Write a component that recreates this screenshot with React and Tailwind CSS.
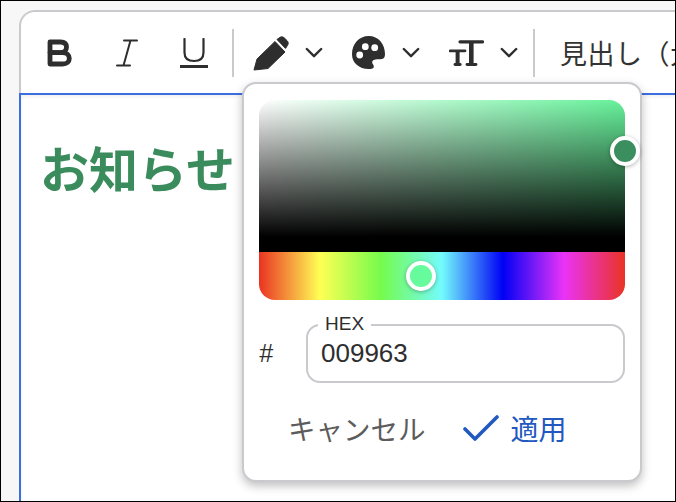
import React from "react";

const Chevron = () => (
  <svg width="18" height="12" viewBox="0 0 18 12" fill="none" stroke="#2e2e2e" strokeWidth="2.4" strokeLinecap="round" strokeLinejoin="round">
    <path d="M1.8 2 L9 9.2 L16.2 2" />
  </svg>
);

const BoldIcon = () => (
  <svg width="25" height="28" viewBox="0 0 25 28" fill="none" stroke="#2e2e2e" strokeWidth="4.8" strokeLinejoin="round" strokeLinecap="round">
    <path d="M3 3H13.5C17.5 3 19.5 5 19.5 8.2C19.5 11.4 17.5 13.6 13.5 13.6H3V3Z" />
    <path d="M3 13.6H15.5C19.8 13.6 22.3 16 22.3 19.4C22.3 22.8 19.8 25 15.5 25H3V13.6Z" />
  </svg>
);

const ItalicIcon = () => (
  <svg width="22" height="28" viewBox="0 0 22 28" fill="none" stroke="#2e2e2e" strokeWidth="2" strokeLinecap="round">
    <path d="M8 1.5H21M1 26.5H14M14.5 1.5L7.5 26.5" />
  </svg>
);

const UnderlineIcon = () => (
  <svg width="28" height="30" viewBox="0 0 28 30" fill="none" stroke="#2e2e2e">
    <path d="M4.5 1V14.5C4.5 20 8 23 14 23C20 23 23.5 20 23.5 14.5V1" strokeWidth="2.2" strokeLinecap="round" />
    <path d="M0 28.5H28" strokeWidth="3" />
  </svg>
);

const PencilIcon = () => (
  <svg width="36" height="36" viewBox="0 0 36 36" fill="#2e2e2e">
    <path d="M1 35L4 24L22 6.5L32 17L15 33.5Z" strokeLinejoin="round" stroke="#2e2e2e" strokeWidth="1" />
    <path d="M24 4.5L26.5 2.6C28 1.6 29.8 1.6 31.2 2.8L34 5.6C35.4 7 35.6 9 34.4 10.6L32.5 13.4Z" stroke="#2e2e2e" strokeWidth="1" strokeLinejoin="round" />
  </svg>
);

const PaletteIcon = () => (
  <svg width="33" height="33" viewBox="0 0 33 33" fill="#2e2e2e">
    <path fillRule="evenodd" d="M0 18.3C0 8 7 0 16.7 0C26.4 0 33 8 33 18.3C33 21 32 22.7 30 23C27.5 23.4 25.5 23 23.5 23.4C20.5 24 19.5 25.5 20.5 27.5C21.3 29 22.3 30 21.7 31.5C21 32.8 19 33 16.7 33C7 33 0 27 0 18.3Z" />
    <circle cx="13.3" cy="10.7" r="3.4" fill="#ffffff" />
    <circle cx="22.7" cy="11.7" r="3.4" fill="#ffffff" />
    <circle cx="7.7" cy="19" r="3.4" fill="#ffffff" />
  </svg>
);

const TextSizeIcon = () => (
  <svg width="35" height="28" viewBox="0 0 35 28" fill="none" stroke="#2e2e2e" strokeLinecap="round">
    <path d="M11 2.8H33.5" strokeWidth="3.2" />
    <path d="M22.3 3V25" strokeWidth="4.6" strokeLinecap="butt" />
    <path d="M18 25.5H27" strokeWidth="2.8" />
    <path d="M1.2 11.8H16" strokeWidth="2.8" />
    <path d="M8.6 12V25" strokeWidth="4" strokeLinecap="butt" />
    <path d="M6 25.5H11.2" strokeWidth="2.8" />
  </svg>
);

const Divider = () => <div className="w-[2px] h-12 bg-[#c9c9ce] shrink-0" />;

export default function App() {
  return (
    <div className="relative w-[676px] h-[502px] overflow-hidden border border-black bg-[#f7f7f7] pt-[9px] pl-[18px] [font-family:'Noto_Sans_CJK_JP','Liberation_Sans',sans-serif] text-[#2e2e2e]">
      <div className="w-[720px] h-[520px] bg-white rounded-tl-[16px]">
        <div className="h-[83px] flex items-center bg-white border-t-2 border-l-2 border-[#c9c9ce] rounded-tl-[16px]">
          <div className="ml-[26px] flex items-center"><BoldIcon /></div>
          <div className="ml-[44px] flex items-center"><ItalicIcon /></div>
          <div className="ml-[42px] flex items-center pt-[1px]"><UnderlineIcon /></div>
          <div className="ml-[24px]"><Divider /></div>
          <div className="ml-[19px] flex items-center"><PencilIcon /></div>
          <div className="ml-[16px] flex items-center"><Chevron /></div>
          <div className="ml-[29px] flex items-center"><PaletteIcon /></div>
          <div className="ml-[17px] flex items-center"><Chevron /></div>
          <div className="ml-[29px] flex items-center"><TextSizeIcon /></div>
          <div className="ml-[16px] flex items-center"><Chevron /></div>
          <div className="ml-[15px]"><Divider /></div>
          <div className="ml-[25px] text-[27px] tracking-[0.5px] leading-none whitespace-nowrap text-[#333333]">見出し（大）</div>
        </div>
        <div className="h-[420px] border-t-2 border-l-2 border-[#3b6fe0] pt-[42px] pl-[19px] text-[49px] leading-[60px] font-bold text-[#3b8c5c] shadow-[inset_0_2px_4px_rgba(0,0,0,0.06)]">
          お知らせ
        </div>
      </div>

      <div className="absolute left-[241px] top-[81px] w-[400px] h-[400px] bg-white border-2 border-[#c9c9ce] rounded-[14px] shadow-[0_4px_10px_rgba(0,0,0,0.25)] px-[15px] pt-[16px]">
        <div className="relative w-[366px] h-[200px]">
          <div className="h-[152px] rounded-t-[16px] bg-[linear-gradient(to_bottom,transparent,#000_90%),linear-gradient(to_right,#ffffff,#66f29a)]" />
          <div className="h-[48px] rounded-b-[16px] bg-[linear-gradient(to_right,#ea3323,#ffff54,#75fb4c,#73fbfd,#0000f5,#ea33f7,#ea3323)]" />
          <div className="absolute left-[351px] top-[36px] w-[30px] h-[30px] rounded-full border-[4px] border-white bg-[#3b8f5f] shadow-[0_1px_4px_rgba(0,0,0,0.3)]" />
          <div className="absolute left-[147px] top-[161px] w-[30px] h-[30px] rounded-full border-[4px] border-white bg-[#66fb9c] shadow-[0_1px_4px_rgba(0,0,0,0.3)]" />
        </div>

        <div className="flex mt-[24px] items-center">
          <div className="w-[47px] text-[25px] leading-none italic [font-family:'Liberation_Sans',sans-serif]">#</div>
          <div className="relative w-[319px] h-[59px] border-2 border-[#c9c9ce] rounded-[14px] pl-[13px] pt-[12px] text-[26px] leading-[30px] [font-family:'Liberation_Sans',sans-serif]">
            009963
            <span className="absolute left-[10px] -top-[12px] bg-white px-[7px] text-[19px] leading-[20px]">HEX</span>
          </div>
        </div>

        <div className="flex items-center mt-[27px] pl-[29px]">
          <span className="text-[27.5px] leading-[36px] text-[#5c5c5c] whitespace-nowrap">キャンセル</span>
          <svg className="ml-[37px]" width="36" height="28" viewBox="0 0 36 28" fill="none" stroke="#2259c0" strokeWidth="3.6" strokeLinecap="round" strokeLinejoin="round">
            <path d="M2 15L12 25L34 3" />
          </svg>
          <span className="ml-[12px] text-[28px] leading-[36px] text-[#2259c0] whitespace-nowrap">適用</span>
        </div>
      </div>
    </div>
  );
}
